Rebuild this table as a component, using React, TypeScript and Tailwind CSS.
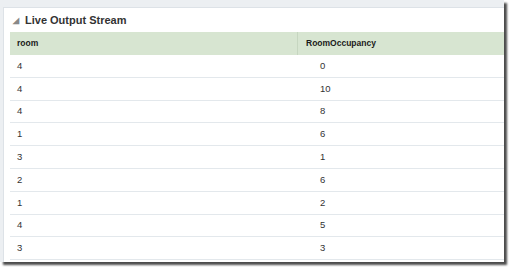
const rows: [number, number][] = [
  [4, 0],
  [4, 10],
  [4, 8],
  [1, 6],
  [3, 1],
  [2, 6],
  [1, 2],
  [4, 5],
  [3, 3],
]

export default function App() {
  return (
    <div className="w-[509px] h-[267px] bg-white font-['Liberation_Sans',Arial,sans-serif]">
      <div className="w-[504px] h-[262px] bg-[#eceff2] pt-[7px] pl-[3px] flex flex-col shadow-[3px_3px_2px_rgba(0,0,0,0.7)] overflow-hidden">
        <div className="flex-1 bg-white border-l border-t border-[#dde2e7] flex flex-col">
          <div className="h-[24px] flex items-center pl-[9px] gap-[6px] text-[11px] font-bold text-[#333]">
            <span className="text-[8px] text-[#888] leading-none mt-[2px]">◢</span>
            <span>Live Output Stream</span>
          </div>
          <div className="ml-[6px] flex flex-col">
            <div className="h-[23px] flex bg-[#d7e5d1] text-[8.5px] font-bold text-[#1a1a1a]">
              <div className="w-[288px] flex items-center pl-[7px] border-r border-[#c6d6c0]">room</div>
              <div className="flex-1 flex items-center pl-[8px]">RoomOccupancy</div>
            </div>
            {rows.map(([room, occ], i) => (
              <div key={i} className="h-[22.8px] flex border-b-[1.5px] border-[#e3e8ec] text-[9.5px] text-[#333]">
                <div className="w-[288px] flex items-center pl-[7px]">{room}</div>
                <div className="flex-1 flex items-center pl-[22px]">{occ}</div>
              </div>
            ))}
          </div>
        </div>
      </div>
    </div>
  )
}
